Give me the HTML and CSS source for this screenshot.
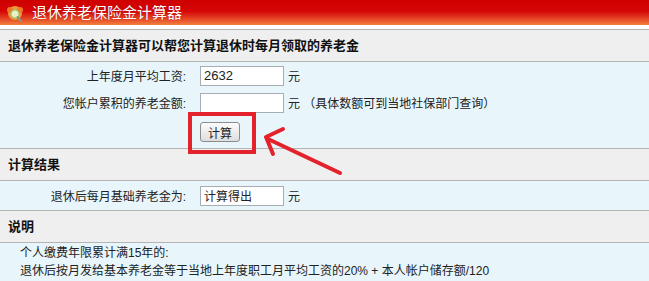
FILE: index.html
```html
<!DOCTYPE html>
<html lang="zh-CN">
<head>
    <meta charset="UTF-8">
    <title>退休养老保险金计算器</title>
    <link rel="stylesheet" href="styles.css">
</head>
<body>
    <div class="page">
        <div class="topbar">
            <svg class="logo" width="20" height="18" viewBox="0 0 20 18">
                <circle cx="10" cy="8" r="7" fill="#f29a3a"/>
                <circle cx="5" cy="5" r="3" fill="#ee7a28"/>
                <circle cx="15" cy="5" r="3" fill="#ee7a28"/>
                <circle cx="10" cy="9" r="4.2" fill="#e9f0c8" stroke="#9cbf62" stroke-width="1.2"/>
                <path d="M12.5 12 L16 16" stroke="#8a9a7a" stroke-width="2" stroke-linecap="round"/>
            </svg>
            <span class="title">退休养老保险金计算器</span>
        </div>

        <div class="panel">
            <div class="sec-title">退休养老保险金计算器可以帮您计算退休时每月领取的养老金</div>
            <div class="sec-body calc">
                <div class="row">
                    <label for="avgWage">上年度月平均工资:</label>
                    <input type="text" id="avgWage" value="2632">
                    <span class="unit">元</span>
                </div>
                <div class="row">
                    <label for="account">您帐户累积的养老金额:</label>
                    <input type="text" id="account">
                    <span class="unit">元 （具体数额可到当地社保部门查询）</span>
                </div>
                <div class="row btn-row">
                    <span></span>
                    <div class="btn-wrap">
                        <button onclick="calculate()">计算</button>
                        <span class="mark"></span>
                    </div>
                </div>
            </div>

            <div class="sec-title">计算结果</div>
            <div class="sec-body">
                <div class="row result-row">
                    <label for="pension">退休后每月基础养老金为:</label>
                    <input type="text" id="pension" value="计算得出">
                    <span class="unit">元</span>
                </div>
            </div>

            <div class="sec-title">说明</div>
            <div class="sec-body note">
                <p>个人缴费年限累计满15年的:</p>
                <p>退休后按月发给基本养老金等于当地上年度职工月平均工资的20% + 本人帐户储存额/120</p>
            </div>
        </div>

        <svg class="arrow" width="649" height="281" viewBox="0 0 649 281">
            <path d="M340 173 L268 139 M266 137 L283 129 M266 137 L273 154" stroke="#e3222c" stroke-width="4" stroke-linecap="round" fill="none"/>
        </svg>
    </div>

    <script>
        function calculate() {
            const wage = parseFloat(document.getElementById('avgWage').value);
            const account = parseFloat(document.getElementById('account').value) || 0;
            if (isNaN(wage)) {
                alert('请输入上年度月平均工资');
                return;
            }
            document.getElementById('pension').value = (wage * 0.2 + account / 120).toFixed(2);
        }
    </script>
</body>
</html>
```

FILE: styles.css
```css
body {
    margin: 0;
    font-family: "Liberation Sans", "Noto Sans CJK SC", sans-serif;
    font-size: 12px;
    color: #222;
    background: #fff;
}
.page {
    position: relative;
    width: 649px;
    height: 281px;
    overflow: hidden;
}
.topbar {
    height: 25px;
    display: flex;
    align-items: center;
    padding-left: 5px;
    background: linear-gradient(#cf0000 0%, #d40606 45%, #e8502a 80%, #f2823e 100%);
    margin-bottom: 4px;
}
.logo {
    display: block;
    margin-top: 2px;
}
.title {
    margin-left: 7px;
    color: #fff;
    font-size: 15px;
    line-height: 25px;
    text-shadow: 0 0 1px rgba(120,0,0,0.6);
}
.panel {
    border-top: 1px solid #b4b4b4;
}
.sec-title {
    height: 31px;
    line-height: 31px;
    padding-left: 8px;
    background: #efefef;
    font-size: 13px;
    font-weight: bold;
    color: #111;
    border-bottom: 1px solid #b4b4b4;
}
.sec-body {
    background: #e8f6fc;
    border-bottom: 1px solid #b4b4b4;
}
.row {
    display: grid;
    grid-template-columns: 186px 84px auto;
    align-items: center;
    height: 27px;
}
.row label {
    text-align: right;
}
.row input {
    box-sizing: border-box;
    width: 84px;
    height: 20px;
    margin-left: 14px;
    padding: 0 3px;
    border: 1px solid #a6adb4;
    background: #fff;
    font-family: inherit;
    font-size: 13px;
    color: #222;
}
#pension {
    font-size: 12px;
}
.unit {
    margin-left: 18px;
}
.btn-row {
    height: 32px;
}
.btn-wrap {
    position: relative;
    margin-left: 14px;
    width: 40px;
    height: 20px;
}
button {
    display: block;
    width: 40px;
    height: 20px;
    padding: 0;
    border: 1px solid #8c8c8c;
    border-radius: 3px;
    background: linear-gradient(#fcfcfc, #dedede);
    font-family: inherit;
    font-size: 12px;
    color: #222;
    cursor: pointer;
}
.mark {
    position: absolute;
    left: -12px;
    top: -10px;
    width: 60px;
    height: 34px;
    border: 4px solid #e3222c;
    pointer-events: none;
}
.result-row {
    height: 29px;
}
.note {
    padding: 1px 0 0 20px;
    border-bottom: none;
    height: 40px;
}
.note p {
    margin: 0;
    line-height: 18px;
}
.arrow {
    position: absolute;
    left: 0;
    top: 0;
    pointer-events: none;
}
```
